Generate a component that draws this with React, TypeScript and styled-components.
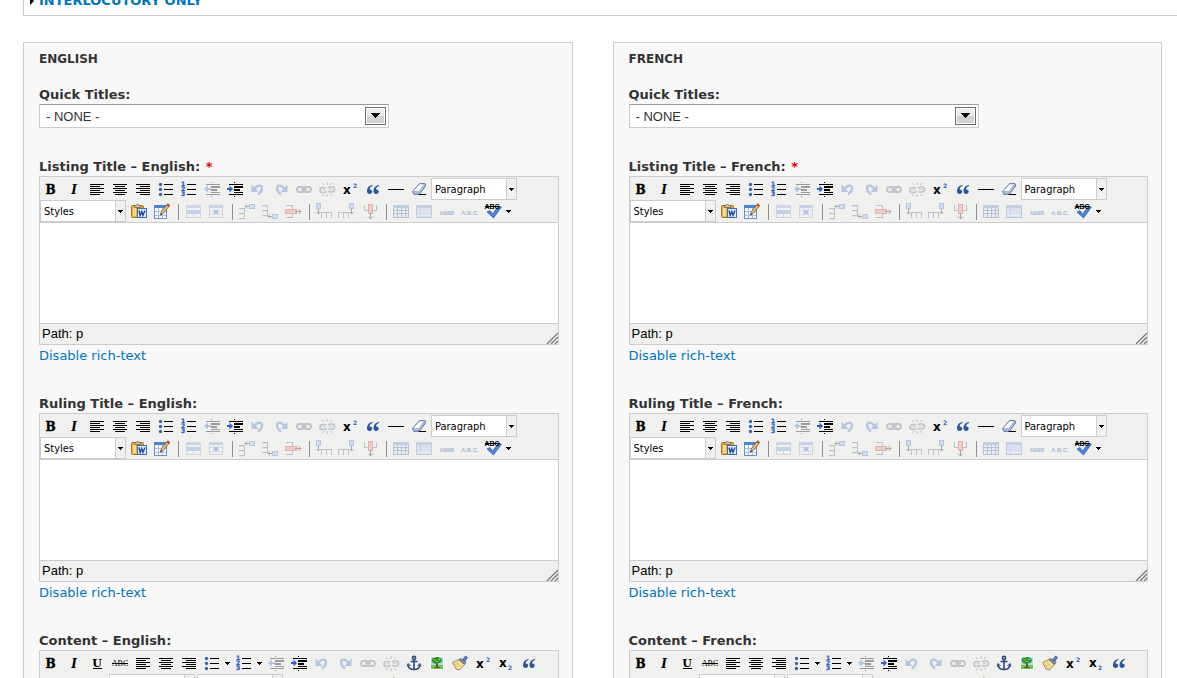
import React, { useId } from 'react';
import styled, { createGlobalStyle } from 'styled-components';

const uiFont = '"DejaVu Sans", Verdana, sans-serif';
const listFont = '"DejaVu Sans Condensed", Tahoma, "DejaVu Sans", sans-serif';
const plainFont = '"Liberation Sans", Arial, sans-serif';

const GlobalStyle = createGlobalStyle`
  *, *::before, *::after { box-sizing: border-box; }
  body {
    margin: 0;
    background: #fff;
    color: #333;
    font: 13px/16px ${uiFont};
  }
`;

const Page = styled.main`
  display: flex;
  flex-direction: column;
  height: 100vh;
  overflow: hidden;
`;

const CollapsedPanel = styled.section`
  flex: none;
  margin: -7px 0 26px 23px;
  padding: 0 0 6px 6px;
  border: solid #ccc;
  border-width: 0 0 1px 1px;
`;

const PanelLink = styled.a`
  display: flex;
  align-items: center;
  gap: 5px;
  color: #0074bd;
  font-weight: bold;
  text-decoration: none;
`;

const Columns = styled.div`
  display: grid;
  grid-template-columns: repeat(2, minmax(0, 1fr));
  gap: 40px;
  padding: 0 15px 0 23px;
`;

const Column = styled.section`
  padding: 8px 13px 15px 15px;
  border: 1px solid #ccc;
  background: #f8f8f8;
`;

const ColumnTitle = styled.h2`
  margin: 0 0 20px;
  font-size: 12px;
  line-height: 16px;
`;

const Field = styled.div<{ $space: number }>`
  margin-bottom: ${(p) => p.$space}px;
`;

const Label = styled.label`
  display: block;
  margin-bottom: 1px;
  font-weight: bold;
`;

const Required = styled.span`
  margin-left: 1px;
  color: #e00000;
`;

const QuickBox = styled.div`
  position: relative;
  width: 350px;
  max-width: 100%;
  svg {
    position: absolute;
    top: 3px;
    right: 3px;
    pointer-events: none;
  }
`;

const QuickSelect = styled.select`
  display: block;
  appearance: none;
  width: 100%;
  height: 24px;
  padding: 1px 28px 0 6px;
  border: 1px solid #ccc;
  border-top-color: #999;
  border-radius: 0;
  background: #fff;
  color: #333;
  font: 13px/20px ${plainFont};
`;

const EditorFrame = styled.div`
  border: 1px solid #ccc;
  background: #f0f0ee;
`;

const Toolbar = styled.div`
  padding-top: 1px;
  border-bottom: 1px solid #ccc;
`;

const ToolRow = styled.div`
  display: flex;
  height: 22px;
`;

const ToolButton = styled.button<{ $split?: boolean }>`
  flex: none;
  display: flex;
  align-items: center;
  gap: 2px;
  width: ${(p) => (p.$split ? 32 : 23)}px;
  height: 22px;
  padding: 0 0 0 1px;
  border: 0;
  background: none;
  color: #000;
  &:disabled svg { opacity: 0.35; }
  svg { flex: none; display: block; }
`;

const Separator = styled.span`
  flex: none;
  width: 1px;
  height: 16px;
  margin: 4px 3px 0 4px;
  background: #8e8e98;
`;

const ListBox = styled.div`
  position: relative;
  flex: none;
  width: 86px;
  height: 22px;
  margin-right: 2px;
  svg {
    position: absolute;
    top: 1px;
    right: 1px;
    pointer-events: none;
  }
`;

const ListSelect = styled.select`
  display: block;
  appearance: none;
  width: 100%;
  height: 100%;
  padding: 2px 12px 0 3px;
  border: 1px solid #ccc;
  border-radius: 0;
  background: #fff;
  color: #000;
  font: 11px/18px ${listFont};
`;

const TextArea = styled.textarea`
  display: block;
  width: 100%;
  height: 100px;
  padding: 8px;
  border: 0;
  outline: 0;
  resize: none;
  background: #fff;
  font: 13px/16px ${plainFont};
`;

const StatusBar = styled.div`
  display: flex;
  align-items: center;
  justify-content: space-between;
  height: 21px;
  padding-left: 2px;
  border-top: 1px solid #ccc;
  color: #000;
  font: 13px/20px ${plainFont};
  svg { align-self: flex-end; }
`;

const ToggleLink = styled.a`
  display: block;
  width: fit-content;
  margin-top: 3px;
  color: #0074bd;
  text-decoration: none;
`;

const H = ({ x, y, w, h = 1, c = '#000' }: { x: number; y: number; w: number; h?: number; c?: string }) => (
  <rect x={x} y={y} width={w} height={h} fill={c} shapeRendering="crispEdges" />
);

const serif = '"DejaVu Serif", serif';
const blue = '#2f5fc4';

const alignLines = (kind: 'left' | 'center' | 'right') =>
  [5, 7, 9, 11, 13, 15].map((y, i) => {
    const w = i % 2 ? 10 : 14;
    const x = kind === 'left' ? 3 : kind === 'center' ? 3 + (14 - w) / 2 : 17 - w;
    return <H key={y} x={x} y={y} w={w} />;
  });

const indentLines = (
  <>
    <H x={9} y={3} w={1} />
    <H x={4} y={5} w={14} />
    <H x={9} y={7} w={9} h={2} />
    <H x={9} y={10} w={6} h={2} />
    <H x={9} y={13} w={9} />
    <H x={4} y={15} w={14} />
    <H x={9} y={17} w={1} />
  </>
);

const tableCells = (y: number) =>
  [0, 5, 10].map((d) => (
    <g key={d}>
      <H x={2} y={y + d} w={6} c="#5c6f86" />
      <H x={2} y={y + d + 1} w={5} c="#c9d3df" />
    </g>
  ));

const smallTable = (y: number) => (
  <>
    {tableCells(y)}
    <H x={7} y={y} w={1} h={11} c="#5c6f86" />
  </>
);

const columnTable = (x: number) => (
  <>
    {[0, 5, 10].map((d) => <H key={d} x={x + d} y={11} w={1} h={6} c="#5c6f86" />)}
    <H x={x} y={11} w={11} c="#5c6f86" />
  </>
);

const ICONS: Record<string, React.ReactNode> = {
  bold: <text x="9.500" y="15" textAnchor="middle" fontFamily={serif} fontSize="12" fontWeight="bold" stroke="#000" strokeWidth=".4">B</text>,
  italic: <text x="10" y="15" textAnchor="middle" fontFamily={serif} fontSize="12" fontWeight="bold" fontStyle="italic">I</text>,
  underline: (
    <>
      <text x="10" y="14" textAnchor="middle" fontFamily={serif} fontSize="11" fontWeight="bold">U</text>
      <H x={6} y={15} w={9} />
    </>
  ),
  strike: (
    <>
      <text x="10" y="13" textAnchor="middle" fontFamily='"Liberation Serif", serif' fontSize="8">ABC</text>
      <H x={2} y={10} w={16} />
    </>
  ),
  left: alignLines('left'),
  center: alignLines('center'),
  right: alignLines('right'),
  bullets: [4, 9, 14].map((y) => (
    <g key={y}>
      <circle cx="4.500" cy={y + 1.5} r="1.700" fill="#3c62a8" />
      <H x={8} y={y + 1} w={9} />
    </g>
  )),
  numbers: [5, 10, 15].map((y, i) => (
    <g key={y}>
      <text x="2" y={y + 2} fontFamily={uiFont} fontSize="6" fontWeight="bold" fill={blue} stroke={blue} strokeWidth=".3">{i + 1}</text>
      <H x={8} y={y} w={9} />
    </g>
  )),
  outdent: (
    <>
      {indentLines}
      <path d="M2 10 6 6.500v2.500h3v2H6v2.500z" fill="#3f78e0" />
    </>
  ),
  indent: (
    <>
      {indentLines}
      <path d="M8 10 4.500 6.500v2.500H2v2h2.500v2.500z" fill={blue} />
    </>
  ),
  undo: (
    <>
      <path d="M6.500 10.500C8.500 6 14 5 14 9.500c0 3-2 4.500-4 6" fill="none" stroke="#4b7bcf" strokeWidth="2.400" />
      <path d="M3.500 5.500v7.500h7z" fill="#4b7bcf" />
    </>
  ),
  redo: (
    <>
      <path d="M13.500 10.500C11.500 6 6 5 6 9.500c0 3 2 4.500 4 6" fill="none" stroke="#4b7bcf" strokeWidth="2.400" />
      <path d="M16.500 5.500v7.500h-7z" fill="#4b7bcf" />
    </>
  ),
  link: (
    <g fill="none" stroke="#67748a" strokeWidth="1.800">
      <rect x="3" y="8" width="7.500" height="5" rx="2.500" />
      <rect x="9.500" y="8" width="7.500" height="5" rx="2.500" />
      <path d="M7 10.500h6" />
    </g>
  ),
  unlink: (
    <g fill="none" stroke="#67748a" strokeWidth="1.700">
      <path d="M9 9 7 8.500H5.500a2.500 2.500 0 0 0 0 5H8L9.500 12M11 9l1.500-1H15a2.400 2.400 0 0 1 0 5h-2.500L11 12.500" />
      <path d="M5.500 10.800h3M12 10.300h3M10 6V3M7 6 5 4M13 6l2-2M10 15v3M7 15l-2 2M13 15l2 2" strokeWidth="1" />
    </g>
  ),
  sup: (
    <>
      <text x="3" y="15" fontFamily={uiFont} fontSize="12" fontWeight="bold">x</text>
      <text x="13" y="9" fontFamily={uiFont} fontSize="6" fontWeight="bold" fill={blue}>2</text>
    </>
  ),
  sub: (
    <>
      <text x="3" y="14" fontFamily={uiFont} fontSize="12" fontWeight="bold">x</text>
      <text x="12" y="17" fontFamily={uiFont} fontSize="6" fontWeight="bold" fill={blue}>2</text>
    </>
  ),
  quote: (
    <g fill="#2d569f">
      <path d="M9.500 6C6 6.500 4 9 4 12.300 4 14 5 15 6.600 15S9.200 14 9.200 12.600 8 10.300 6.600 10.400C6.800 8.500 8 7.300 9.500 7z" />
      <path d="M16 6c-3.500.5-5.500 3-5.500 6.300 0 1.700 1 2.700 2.600 2.700s2.600-1 2.600-2.400-1.200-2.300-2.600-2.200c.2-1.900 1.400-3.100 2.900-3.400z" />
    </g>
  ),
  hr: <H x={2} y={10} w={16} />,
  eraser: (
    <>
      <H x={9} y={15} w={8} />
      <path d="M3.500 12.500 10.500 4.500l5.500 0 .5 2.500-6 8-5.500.5z" fill="#aebfe0" stroke="#5f76a8" />
      <path d="M4 12.500 10.500 5h5L10 12.500z" fill="#fff" stroke="#8fa3c8" strokeWidth=".7" />
    </>
  ),
  pasteWord: (
    <>
      <rect x="2.500" y="4.500" width="12" height="12" rx="1" fill="#e8b13a" stroke="#a8741c" />
      <rect x="4" y="6" width="3" height="9" fill="#f8d987" />
      <path d="M5 6.500V4.500h2q1.500-3 3 0h2v2z" fill="#c9c3a8" stroke="#77653a" strokeWidth=".8" />
      <rect x="8.500" y="7.500" width="9" height="9" fill="#dfeafd" stroke="#3d6cb8" />
      <path d="m10 9.500 1.200 5 1.600-4 1.200 4 2-5" fill="none" stroke="#1f4c9e" strokeWidth="1.400" />
    </>
  ),
  styleEdit: (
    <>
      <rect x="2.500" y="4.500" width="12" height="13" fill="#f4f8ff" stroke="#6c8fc4" />
      <H x={2} y={4} w={13} h={3} c="#4f82cf" />
      <H x={3} y={10} w={11} c="#a9c0e4" />
      <H x={3} y={14} w={11} c="#a9c0e4" />
      <H x={6} y={7} w={1} h={10} c="#a9c0e4" />
      <H x={10} y={7} w={1} h={10} c="#a9c0e4" />
      <path d="m8.500 14 1-3.500L15.500 3l2 1.800-6 7.400z" fill="#e8c07a" stroke="#6e5326" strokeWidth=".8" />
      <path d="m14.500 4.200 1.400-1.900 2 1.700-1.300 1.900z" fill="#b9503c" />
      <path d="m8.300 14.300.6-2 1.200 1z" fill="#222" />
    </>
  ),
  rowProps: (
    <>
      <rect x="3.500" y="4.500" width="14" height="12" fill="#f2f5fb" stroke="#93a3c0" />
      <H x={3} y={4} w={15} h={3} c="#8da6d8" />
      <H x={4} y={9} w={13} h={4} c="#6f98ea" />
      <H x={10} y={13} w={1} h={3} c="#93a3c0" />
    </>
  ),
  cellProps: (
    <>
      <rect x="3.500" y="4.500" width="13" height="12" fill="#f2f5fb" stroke="#93a3c0" />
      <H x={3} y={4} w={14} h={3} c="#7b9ee0" />
      <H x={4} y={9} w={12} c="#b7c2d8" />
      <H x={4} y={13} w={12} c="#b7c2d8" />
      <H x={7} y={7} w={1} h={9} c="#b7c2d8" />
      <H x={12} y={7} w={1} h={9} c="#b7c2d8" />
      <H x={8} y={9} w={4} h={4} c="#3f74dd" />
    </>
  ),
  rowBefore: (
    <>
      {smallTable(7)}
      <rect x="12.500" y="3.500" width="5" height="4" fill="#9dbcf5" stroke="#4a78d8" />
      <path d="M12 5.500H8M10 3.500l-2 2 2 2" fill="none" stroke="#222" />
    </>
  ),
  rowAfter: (
    <>
      {smallTable(4)}
      <rect x="12.500" y="13.500" width="5" height="4" fill="#9dbcf5" stroke="#4a78d8" />
      <path d="M12 15.500H8M10 13.500l-2 2 2 2" fill="none" stroke="#222" />
    </>
  ),
  rowDelete: (
    <>
      <H x={3} y={4} w={7} c="#5c6f86" />
      <H x={3} y={16} w={7} c="#5c6f86" />
      <H x={9} y={4} w={1} h={13} c="#5c6f86" />
      <rect x="2.500" y="8.500" width="11" height="4" fill="#f48a80" stroke="#d04238" />
      <path d="M12 10.500h6M15.500 8l2.500 2.500-2.500 2.500" fill="none" stroke="#222" />
    </>
  ),
  colBefore: (
    <>
      {columnTable(7)}
      <rect x="2.500" y="2.500" width="4" height="5" fill="#9dbcf5" stroke="#4a78d8" />
      <path d="M4.500 8v5M2.500 11l2 2 2-2" fill="none" stroke="#222" />
    </>
  ),
  colAfter: (
    <>
      {columnTable(1)}
      <rect x="12.500" y="2.500" width="4" height="5" fill="#9dbcf5" stroke="#4a78d8" />
      <path d="M14.500 8v5M12.500 11l2 2 2-2" fill="none" stroke="#222" />
    </>
  ),
  colDelete: (
    <>
      <H x={4} y={4} w={1} h={6} c="#5c6f86" />
      <H x={16} y={4} w={1} h={6} c="#5c6f86" />
      <H x={4} y={9} w={13} c="#5c6f86" />
      <rect x="8.500" y="3.500" width="4" height="9" fill="#f48a80" stroke="#d04238" />
      <path d="M10.500 12v6M8 15.500l2.500 2.500 2.500-2.500" fill="none" stroke="#222" />
    </>
  ),
  table: (
    <>
      <rect x="2.500" y="4.500" width="15" height="12" fill="#e3ebf8" stroke="#4a6cab" />
      <H x={2} y={4} w={16} h={3} c="#6d90d2" />
      {[9, 12].map((y) => <H key={y} x={3} y={y} w={14} h={1} c="#4a6cab" />)}
      {[6, 10, 14].map((x) => <H key={x} x={x} y={6} w={1} h={10} c="#4a6cab" />)}
    </>
  ),
  layer: (
    <>
      <rect x="2.500" y="4.500" width="15" height="12" fill="#b5c8ee" stroke="#6482b8" />
      <H x={2} y={4} w={16} h={3} c="#7295d6" />
      <H x={6} y={6} w={1} h={10} c="#7f9fd6" />
      <H x={3} y={14} w={14} c="#e5edfb" />
    </>
  ),
  abbr: <text x="10" y="14" textAnchor="middle" fontFamily='"Liberation Mono", monospace' fontSize="6" fontWeight="bold" fill="#24529f">ABBR</text>,
  acronym: <text x="10" y="14" textAnchor="middle" fontFamily={plainFont} fontSize="6" fontWeight="bold" fill="#24529f">A.B.C.</text>,
  spell: (
    <>
      <path d="m4 11 3-1.500 2.500 3.500 5.500-7 3.500 0-8 11z" fill="#4c83de" stroke="#2b57a8" strokeWidth=".7" />
      <text x="9" y="8" textAnchor="middle" fontFamily={plainFont} fontSize="7" fontWeight="bold">ABC</text>
      <H x={2} y={5} w={15} />
    </>
  ),
  anchor: (
    <g fill="none" stroke="#2b4a7e" strokeWidth="1.600">
      <circle cx="10" cy="5" r="1.600" />
      <path d="M10 6.500v10M6.500 8.500h7M4.200 11.500c0 3.500 2.500 5 5.800 5s5.800-1.500 5.800-5" />
      <path d="m3 13.500 1.200-3 2.300 2.500M17 13.500l-1.200-3-2.300 2.500" strokeWidth="1" />
    </g>
  ),
  image: (
    <>
      <rect x="3" y="3" width="14" height="14" fill="#fff" />
      <H x={4} y={4} w={12} h={8} c="#a9d8f5" />
      <H x={4} y={12} w={12} h={4} c="#7cc04a" />
      <H x={9} y={9} w={2} h={6} c="#7b4a20" />
      <H x={7} y={14} w={6} c="#2f7020" />
      <path d="M5 8.500C4 6 6 4.500 8 4.800 9.500 3.500 12 3.800 12.500 5c2 0 3 2 2 3.800-1 1.700-3 .8-4 1.700-1.500.5-4.500 0-5.500-2z" fill="#2e9422" />
      <path d="M6.500 7h2M11 6.500h2M9 8.500h2" stroke="#8cd84c" />
    </>
  ),
  cleanup: (
    <>
      <path d="m12 7.500 3.500-4.500 2 1.500-3.500 5z" fill="#5a7fd0" stroke="#34509a" strokeWidth=".8" />
      <path d="M2.500 9.500 9 6.500l5.500 5L9.500 17 6 16z" fill="#f3dfa0" stroke="#8f743a" strokeWidth=".8" />
      <path d="m9 6.500 2-1 5 4-1.500 2z" fill="#8b8f9c" stroke="#4e5260" strokeWidth=".7" />
      <path d="m4.500 10.500 3.500 4M7 9l3.500 4.500" stroke="#d0b264" strokeWidth=".9" />
    </>
  ),
};

const DownArrow = () => (
  <svg width="7" height="20" viewBox="0 0 7 20" aria-hidden="true">
    <path d="M1 9h5v1H5v1H4v1H3v-1H2v-1H1z" shapeRendering="crispEdges" />
  </svg>
);

type Tool = string;

const Item = ({ tool }: { tool: Tool }) => {
  if (tool === '|') return <Separator />;
  if (tool.startsWith('select:')) {
    const name = tool.slice(7);
    return (
      <ListBox>
        <ListSelect aria-label={name}>
          <option>{name}</option>
        </ListSelect>
        <svg width="10" height="20" viewBox="0 0 10 20" aria-hidden="true">
          <path d="M0 0h10v20H0z" fill="#f0f0ee" />
          <path d="M0 0h1v20H0z" fill="#ccc" />
          <path d="M3 9h5v1H7v1H6v1H5v-1H4v-1H3z" shapeRendering="crispEdges" />
        </svg>
      </ListBox>
    );
  }
  const disabled = tool.startsWith('-');
  const split = tool.endsWith('+');
  const name = tool.replace(/^-|\+$/g, '');
  return (
    <ToolButton type="button" aria-label={name} disabled={disabled} $split={split}>
      <svg width="20" height="20" viewBox="0 0 20 20" aria-hidden="true">{ICONS[name]}</svg>
      {split && <DownArrow />}
    </ToolButton>
  );
};

const TITLE_ROWS: Tool[][] = [
  ['bold', 'italic', 'left', 'center', 'right', 'bullets', 'numbers', '-outdent', 'indent', '-undo', '-redo',
    '-link', '-unlink', 'sup', 'quote', 'hr', 'eraser', 'select:Paragraph'],
  ['select:Styles', 'pasteWord', 'styleEdit', '|', '-rowProps', '-cellProps', '|', '-rowBefore', '-rowAfter',
    '-rowDelete', '|', '-colBefore', '-colAfter', '-colDelete', '|', '-table', '-layer', '-abbr', '-acronym', 'spell+'],
];

const CONTENT_ROWS: Tool[][] = [
  ['bold', 'italic', 'underline', 'strike', 'left', 'center', 'right', 'bullets+', 'numbers+', '-outdent',
    'indent', '-undo', '-redo', '-link', '-unlink', 'anchor', 'image', 'cleanup', 'sup', 'sub', 'quote'],
  ['hr', 'eraser', '-table', 'select:Paragraph', 'select:Styles', '-rowProps', '-cellProps', '-layer', 'hr', 'styleEdit'],
];

const Editor = ({ label, required, rows }: { label: string; required?: boolean; rows: Tool[][] }) => {
  const id = useId();
  return (
    <Field $space={32}>
      <Label htmlFor={id}>
        {label}: {required && <Required>*</Required>}
      </Label>
      <EditorFrame>
        <Toolbar>
          {rows.map((row, r) => (
            <ToolRow key={r}>
              {row.map((tool, i) => <Item key={i} tool={tool} />)}
            </ToolRow>
          ))}
        </Toolbar>
        <TextArea id={id} />
        <StatusBar>
          <span>Path: p</span>
          <svg width="12" height="12" viewBox="0 0 12 12" aria-hidden="true">
            <path d="M1 12 12 1M5 12l7-7M9 12l3-3" stroke="#777" strokeWidth="1.300" />
          </svg>
        </StatusBar>
      </EditorFrame>
      <ToggleLink href="#rich-text">Disable rich-text</ToggleLink>
    </Field>
  );
};

const LanguageColumn = ({ language }: { language: string }) => {
  const id = useId();
  return (
    <Column>
      <ColumnTitle>{language.toUpperCase()}</ColumnTitle>
      <Field $space={31}>
        <Label htmlFor={id}>Quick Titles:</Label>
        <QuickBox>
          <QuickSelect id={id}>
            <option>- NONE -</option>
          </QuickSelect>
          <svg width="21" height="18" viewBox="0 0 21 18" shapeRendering="crispEdges" aria-hidden="true">
            <path d="M0 0h21v18H0z" fill="#6b6b6b" />
            <path d="M1 1h19v16H1z" fill="#fff" />
            <path d="M2 2h17v7H2z" fill="#ebebeb" />
            <path d="M2 9h17v7H2z" fill="#d2d2d2" />
            <path d="M6 6h9v1h-1v1h-1v1h-1v1h-1v1h-1v-1H9V9H8V8H7V7H6z" fill="#000" />
          </svg>
        </QuickBox>
      </Field>
      <Editor label={`Listing Title – ${language}`} required rows={TITLE_ROWS} />
      <Editor label={`Ruling Title – ${language}`} rows={TITLE_ROWS} />
      <Editor label={`Content – ${language}`} rows={CONTENT_ROWS} />
    </Column>
  );
};

export default function App() {
  return (
    <>
      <GlobalStyle />
      <Page>
        <CollapsedPanel>
          <PanelLink href="#interlocutory">
            <svg width="4" height="8" viewBox="0 0 4 8" aria-hidden="true">
              <path d="M0 0v8l4-4z" fill="#000" />
            </svg>
            INTERLOCUTORY ONLY
          </PanelLink>
        </CollapsedPanel>
        <Columns>
          <LanguageColumn language="English" />
          <LanguageColumn language="French" />
        </Columns>
      </Page>
    </>
  );
}
